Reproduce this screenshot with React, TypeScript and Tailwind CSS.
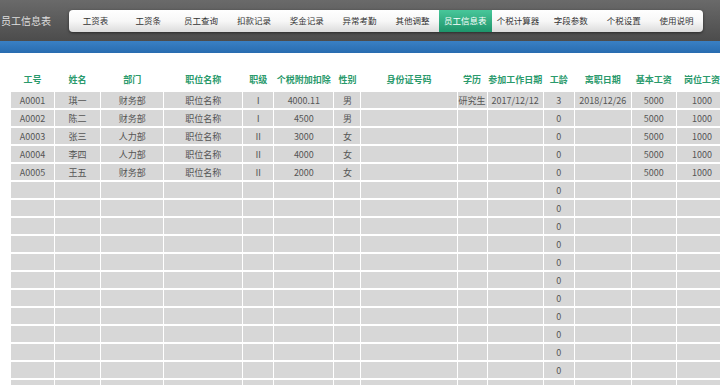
const navItems = [
  "工资表",
  "工资条",
  "员工查询",
  "扣款记录",
  "奖金记录",
  "异常考勤",
  "其他调整",
  "员工信息表",
  "个税计算器",
  "字段参数",
  "个税设置",
  "使用说明",
];

const columns = [
  { title: "工号", w: 43 },
  { title: "姓名", w: 45 },
  { title: "部门", w: 62 },
  { title: "职位名称", w: 78 },
  { title: "职级", w: 30 },
  { title: "个税附加扣除", w: 59 },
  { title: "性别", w: 26 },
  { title: "身份证号码", w: 95 },
  { title: "学历", w: 29 },
  { title: "参加工作日期", w: 55 },
  { title: "工龄", w: 30 },
  { title: "离职日期", w: 56 },
  { title: "基本工资", w: 44 },
  { title: "岗位工资", w: 50 },
];

const people = [
  ["A0001", "琪一", "财务部", "职位名称", "Ⅰ", "4000.11", "男", "", "研究生", "2017/12/12", "3", "2018/12/26", "5000", "1000"],
  ["A0002", "陈二", "财务部", "职位名称", "Ⅰ", "4500", "男", "", "", "", "0", "", "5000", "1000"],
  ["A0003", "张三", "人力部", "职位名称", "Ⅱ", "3000", "女", "", "", "", "0", "", "5000", "1000"],
  ["A0004", "李四", "人力部", "职位名称", "Ⅱ", "4000", "女", "", "", "", "0", "", "5000", "1000"],
  ["A0005", "王五", "财务部", "职位名称", "Ⅱ", "2000", "女", "", "", "", "0", "", "5000", "1000"],
];

const rows = [
  ...people,
  ...Array.from({ length: 12 }, () => ["", "", "", "", "", "", "", "", "", "", "0", "", "", ""]),
];

export default function App() {
  return (
    <div className="w-[720px] h-[385px] overflow-hidden bg-white font-['Noto_Sans_CJK_SC','Noto_Sans',sans-serif]">
      {/* top bar */}
      <div className="h-[41px] flex items-center bg-gradient-to-b from-[#6a6a6a] to-[#4c4c4c]">
        <div className="w-[69px] pl-px text-[10px] text-[#dedede] leading-none">员工信息表</div>
        <div className="w-[634px] h-[22px] flex rounded-[4px] bg-gradient-to-b from-white via-[#f7f7f7] to-[#dcdcdc] shadow-[0_1px_3px_rgba(0,0,0,0.5)] overflow-hidden">
          {navItems.map((item) => (
            <div
              key={item}
              className={
                item === "员工信息表"
                  ? "flex-1 flex items-center justify-center text-[8.5px] text-white bg-gradient-to-b from-[#48c79a] to-[#1d956b]"
                  : "flex-1 flex items-center justify-center text-[8.5px] text-[#333]"
              }
            >
              {item}
            </div>
          ))}
        </div>
      </div>
      <div className="h-[12px] bg-gradient-to-b from-[#3a80c4] to-[#286cb0]" />

      {/* table */}
      <div className="pt-[15px] pl-[10px]">
        <table className="w-[718px] table-fixed border-separate border-spacing-x-px border-spacing-y-[2px]">
          <colgroup>
            {columns.map((c) => (
              <col key={c.title} style={{ width: c.w }} />
            ))}
          </colgroup>
          <thead>
            <tr>
              {columns.map((c) => (
                <th
                  key={c.title}
                  className="h-[20px] p-0 text-center text-[9px] font-bold text-[#2a9a6c] whitespace-nowrap"
                >
                  {c.title}
                </th>
              ))}
            </tr>
          </thead>
          <tbody>
            {rows.map((r, i) => (
              <tr key={i}>
                {r.map((v, j) => (
                  <td
                    key={j}
                    className="h-[16px] p-0 bg-[#d7d7d7] text-center text-[9px] leading-none text-[#555] whitespace-nowrap overflow-hidden"
                  >
                    {v}
                  </td>
                ))}
              </tr>
            ))}
          </tbody>
        </table>
      </div>
    </div>
  );
}
